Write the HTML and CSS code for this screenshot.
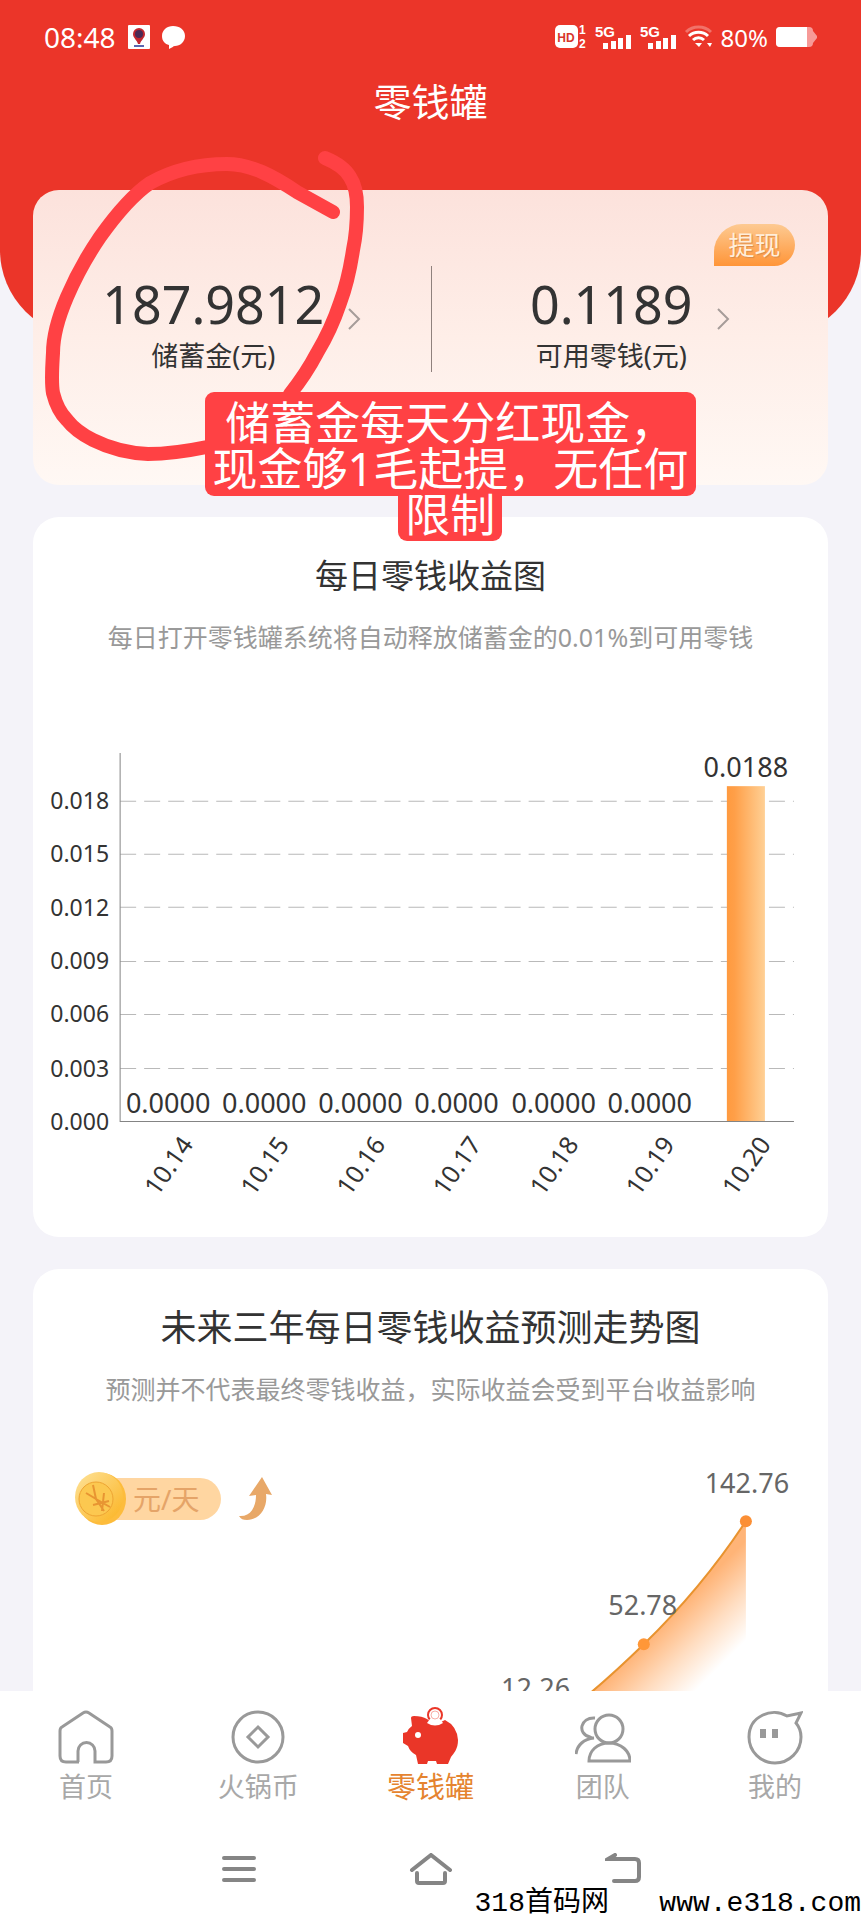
FILE: index.html
```html
<!doctype html>
<html lang="zh-CN">
  <head>
    <meta charset="UTF-8" />
    <meta name="viewport" content="width=device-width, initial-scale=1" />
    <title>零钱罐</title>
    <link rel="stylesheet" href="styles.css">
  </head>
  <body>
    <main class="content">
      <header class="hero">
        <div class="status">
          <span class="status-time">08:48</span>
          <svg class="status-app" width="22" height="24" viewBox="0 0 22 24">
            <rect width="22" height="24" rx="1" fill="#fff" />
            <path d="M11 3a6 6 0 0 1 6 6c0 4-4 6-5 10h-2C9 15 5 13 5 9a6 6 0 0 1 6-6z" fill="#c3272f" />
            <circle cx="11" cy="9" r="4" fill="#4a2a55" />
            <path d="M6 21h10" stroke="#5a66b0" stroke-width="2" />
          </svg>
          <svg class="status-chat" width="23" height="23" viewBox="0 0 23 23">
            <path d="M11 0c7 0 12 4 12 10s-5 10-10 10c-2 0-3 2-6 3V19C3 18 0 15 0 10 0 4 5 0 11 0z" fill="#fff" />
          </svg>
          <span class="status-gap"></span>
          <svg width="32" height="24" viewBox="0 0 32 24" fill="#fff">
            <rect width="23" height="23" rx="5" />
            <text class="hd-text" x="11" y="17" text-anchor="middle">HD</text>
            <text class="sim-text" x="24" y="9">1</text>
            <text class="sim-text" x="24" y="23">2</text>
          </svg>
          <svg width="37" height="24" viewBox="0 0 37 24" fill="#fff">
            <text class="net-text" x="0" y="12">5G</text>
            <path d="M8 18h5v6H8zM16 16h5v8h-5zM23 13h5v11h-5zM31 10h5v14h-5z" />
          </svg>
          <svg width="37" height="24" viewBox="0 0 37 24" fill="#fff">
            <text class="net-text" x="0" y="12">5G</text>
            <path d="M8 18h5v6H8zM16 16h5v8h-5zM23 13h5v11h-5zM31 10h5v14h-5z" />
          </svg>
          <svg width="28" height="22" viewBox="0 0 28 22" fill="none" stroke="#fff" stroke-width="3">
            <path d="M1 6a18 18 0 0 1 25 0" opacity="0.3" />
            <path d="M4 10a14 14 0 0 1 19 0" />
            <path d="M8 14a8 8 0 0 1 11 0" />
            <path d="M10 17h7l-3 4z" fill="#fff" stroke="none" />
            <path d="M22 17h5l-2 4z" fill="#fff" stroke="none" />
          </svg>
          <span class="status-battery">80%</span>
          <svg width="41" height="20" viewBox="0 0 41 20">
            <path d="M4 0h29q4 0 4 4l4 5v2l-4 5q0 4-4 4H4q-4 0-4-4V4q0-4 4-4z" fill="#f79a97" />
            <path d="M4 0h27v20H4q-4 0-4-4V4q0-4 4-4z" fill="#fff" />
          </svg>
        </div>
        <h1 class="hero-title">零钱罐</h1>
      </header>

      <section class="card balance">
        <button class="withdraw" type="button">提现</button>
        <a class="balance-item" href="#savings">
          <span class="balance-text">
            <strong class="balance-value">187.9812</strong>
            <span class="balance-label">储蓄金(元)</span>
          </span>
          <svg width="13" height="22" viewBox="0 0 13 22"><path class="chevron" d="M1 1l10 10L1 21" /></svg>
        </a>
        <a class="balance-item" href="#change">
          <span class="balance-text">
            <strong class="balance-value">0.1189</strong>
            <span class="balance-label">可用零钱(元)</span>
          </span>
          <svg width="13" height="22" viewBox="0 0 13 22"><path class="chevron" d="M1 1l10 10L1 21" /></svg>
        </a>

        <!-- hand-drawn circle and note -->
        <svg class="scribble" width="340" height="330" viewBox="0 0 340 330">
          <path d="M300 64L264 44C240 28 218 16 194 16C164 16 140 22 117 35C98 48 82 68 67 89C54 108 43 128 34 149C25 170 20 188 20 205C19 222 18 234 20 245C23 257 28 266 34 272C41 281 50 287 60 292C78 301 94 305 115 306Q140 306 174 299" />
          <path d="M292 10C304 15 312 20 317 29C323 38 324 48 324 59C324 74 323 88 320 102C317 122 313 139 307 155C301 173 293 190 284 205Q273 226 257 246" />
        </svg>
        <p class="note">
          <span class="note-main">储蓄金每天分红现金，<br>现金够1毛起提，无任何</span>
          <span class="note-tail">限制</span>
        </p>
      </section>

      <section class="card">
        <h2 class="card-title card-title-small">每日零钱收益图</h2>
        <p class="card-hint">每日打开零钱罐系统将自动释放储蓄金的0.01%到可用零钱</p>
        <svg class="chart" viewBox="0 0 794 581">
          <defs>
            <linearGradient id="bar-fill">
              <stop offset="0" stop-color="#ff9a3f" />
              <stop offset="0.2" stop-color="#ff9f48" />
              <stop offset="1" stop-color="#ffd095" />
            </linearGradient>
          </defs>
          <path class="grid-line" d="M87 146H760M87 199H760M87 252H760M87 306H760M87 359H760M87 413H760" />
          <rect x="693" y="131" width="38" height="335" fill="url(#bar-fill)" />
          <path class="axis-line" d="M87 98V466H760" />
          <g class="y-labels">
            <text x="76" y="154">0.018</text>
            <text x="76" y="207">0.015</text>
            <text x="76" y="261">0.012</text>
            <text x="76" y="314">0.009</text>
            <text x="76" y="367">0.006</text>
            <text x="76" y="421">0.003</text>
            <text x="76" y="474">0.000</text>
          </g>
          <g class="bar-values">
            <text x="135" y="457">0.0000</text>
            <text x="231" y="457">0.0000</text>
            <text x="327" y="457">0.0000</text>
            <text x="423" y="457">0.0000</text>
            <text x="520" y="457">0.0000</text>
            <text x="616" y="457">0.0000</text>
            <text x="712" y="122">0.0188</text>
          </g>
          <g class="x-labels">
            <text transform="translate(161 489) rotate(-55)">10.14</text>
            <text transform="translate(257 489) rotate(-55)">10.15</text>
            <text transform="translate(353 489) rotate(-55)">10.16</text>
            <text transform="translate(449 489) rotate(-55)">10.17</text>
            <text transform="translate(546 489) rotate(-55)">10.18</text>
            <text transform="translate(642 489) rotate(-55)">10.19</text>
            <text transform="translate(738 489) rotate(-55)">10.20</text>
          </g>
        </svg>
      </section>

      <section class="card">
        <h2 class="card-title">未来三年每日零钱收益预测走势图</h2>
        <p class="card-hint">预测并不代表最终零钱收益，实际收益会受到平台收益影响</p>
        <div class="trend">
          <svg class="chart" viewBox="0 0 794 400">
            <defs>
              <linearGradient id="area-fill" gradientUnits="userSpaceOnUse" x1="640" y1="205" x2="690" y2="255">
                <stop offset="0" stop-color="#ffb477" />
                <stop offset="0.5" stop-color="#ffdcbf" />
                <stop offset="1" stop-color="#ffffff" />
              </linearGradient>
            </defs>
            <path d="M508 318C542 298 577 270 610 237C650 198 685 155 712 114V400H508z" fill="url(#area-fill)" />
            <path class="trend-line" d="M500 328C542 300 574 272 610 237C650 198 685 155 712 114" />
            <circle cx="610" cy="237" r="6" fill="#ff9738" />
            <circle cx="712" cy="114" r="6" fill="#fb8f35" />
            <g class="trend-values">
              <text x="502" y="291">12.26</text>
              <text x="609" y="208">52.78</text>
              <text x="713" y="86">142.76</text>
            </g>
          </svg>
          <div class="legend">
            <svg class="coin" width="56" height="56" viewBox="0 0 56 56">
              <defs>
                <linearGradient id="coin-fill" x2="1" y2="1">
                  <stop offset="0" stop-color="#fee39a" />
                  <stop offset="1" stop-color="#fbb321" />
                </linearGradient>
              </defs>
              <ellipse cx="29" cy="28" rx="24" ry="26" fill="#fdbc3c" />
              <ellipse cx="26" cy="26" rx="24" ry="25" fill="url(#coin-fill)" />
              <circle cx="23" cy="28" r="17" fill="#fcc850" stroke="#eea432" stroke-width="1" />
              <path d="M20 14l3 14 14 8M13 22l10 6 8 12M31 22l-2 18M20 34l16-4" fill="none" stroke="#e89532" stroke-width="2" />
            </svg>
            <span class="legend-unit">元/天</span>
            <svg width="33" height="43" viewBox="0 0 33 43">
              <path d="M23 0l10 18-6-1c2 14-7 26-19 26-4 0-6-1-8-4 11 1 17-8 17-21l-7 1z" fill="#e8a868" />
            </svg>
          </div>
        </div>
      </section>
    </main>

    <footer class="footer">
      <nav class="tabs">
        <a class="tab" href="#home">
          <svg class="tab-icon" viewBox="0 0 56 56">
            <path d="M21 53H8q-6 0-6-6V22q0-3 2-4L25 4q3-2 6 0l21 14q2 1 2 4v25q0 6-6 6H37V42a8 8 0 0 0-17 0v11" />
          </svg>
          首页
        </a>
        <a class="tab" href="#coin">
          <svg class="tab-icon" viewBox="0 0 56 56">
            <circle cx="28" cy="28" r="25" />
            <path d="M28 18l10 10-10 10-10-10z" />
          </svg>
          火锅币
        </a>
        <a class="tab tab-active" href="#jar">
          <svg class="tab-icon-fill" viewBox="0 0 56 56">
            <path d="M8 9q0-2 3-2 8 0 13 3 9 7 18 1 12 6 13 20c0 9-4 13-7 17l-3 7H34l-1-3h-8l-1 3H15l-2-9q-6-3-8-9l-5-3V24l4-1q2-4 5-6z" />
            <circle cx="15" cy="26" r="3" fill="#fff" />
            <circle cx="32" cy="6" r="7" fill="#fff" stroke="#ea3628" stroke-width="2" />
            <path d="M24 14q8 5 16 0l-3-4H27z" fill="#fff" />
            <circle cx="32" cy="6" r="4" fill="none" stroke="#ea3628" stroke-width="1" opacity="0.4" />
          </svg>
          零钱罐
        </a>
        <a class="tab" href="#team">
          <svg class="tab-icon" viewBox="0 0 56 56">
            <circle cx="34" cy="20" r="14" />
            <path d="M14 52c0-10 8-18 20-18s21 8 21 18z" />
            <path d="M20 9c-15-1-18 16-5 19q2 1 4 1C9 30 2 36 1 45" />
          </svg>
          团队
        </a>
        <a class="tab" href="#mine">
          <svg class="tab-icon" viewBox="0 0 56 56">
            <path d="M40 7C25-2 2 7 2 28a26 26 0 0 0 52 0q0-8-5-14l5-10z" />
            <path class="eyes" d="M16 20v9M28 20v9" />
          </svg>
          我的
        </a>
      </nav>
      <div class="system">
        <button class="system-button" type="button" aria-label="菜单">
          <svg width="36" height="32" viewBox="0 0 36 32"><path d="M3 5h30M3 16h30M3 27h30" /></svg>
        </button>
        <button class="system-button" type="button" aria-label="主屏幕">
          <svg width="44" height="32" viewBox="0 0 44 32"><path d="M3 17L22 2l19 15M8 20v8q0 2 2 2h24q2 0 2-2v-8" /></svg>
        </button>
        <button class="system-button" type="button" aria-label="返回">
          <svg width="36" height="32" viewBox="0 0 36 32"><path d="M10 2L3 6h27q4 0 4 4v14q0 4-4 4H9" /></svg>
        </button>
      </div>
      <p class="watermark">318首码网   www.e318.com</p>
    </footer>
  </body>
</html>
```

FILE: styles.css
```css
* {
  margin: 0;
  padding: 0;
  box-sizing: border-box;
}

body {
  display: flex;
  flex-direction: column;
  height: 100vh;
  background: #f4f3f9;
  color: #333;
  font-family: "Noto Sans", "Noto Sans CJK SC", sans-serif;
  font-size: 27px;
}

a {
  color: inherit;
  text-decoration: none;
}

button {
  border: none;
  background: none;
  font-family: inherit;
  cursor: pointer;
}

svg {
  display: block;
  flex: none;
}

.content {
  flex: 1;
  min-height: 0;
  overflow-y: auto;
  scrollbar-width: none;
}

/* red top area */
.hero {
  height: 337px;
  padding-top: 18px;
  border-radius: 0 0 87px 87px;
  background: #eb3529;
  color: #fff;
}

.status {
  display: flex;
  align-items: center;
  gap: 8px;
  height: 38px;
  padding: 0 44px;
}

.status svg {
  overflow: visible;
}

.status-time {
  font-size: 28px;
}

.status-app {
  margin-left: 4px;
}

.status-chat {
  margin-left: 4px;
}

.status-gap {
  flex: 1;
}

.status-battery {
  font-size: 24px;
}

.hd-text,
.sim-text,
.net-text {
  font-family: "Liberation Sans", sans-serif;
  font-size: 12px;
  font-weight: 700;
}

.hd-text {
  fill: #d8352b;
}

.net-text {
  font-size: 15px;
}

.hero-title {
  margin-top: 20px;
  font-size: 38px;
  font-weight: 400;
  line-height: 50px;
  text-align: center;
}

/* cards */
.card {
  margin: 0 33px 32px;
  padding-top: 36px;
  border-radius: 26px;
  background: #fff;
}

.card-title {
  font-size: 36px;
  font-weight: 400;
  line-height: 46px;
  text-align: center;
}

.card-title-small {
  font-size: 33px;
}

.card-hint {
  margin-top: 20px;
  color: #999;
  font-size: 25px;
  line-height: 36px;
  text-align: center;
  white-space: nowrap;
}

.balance {
  position: relative;
  display: grid;
  grid-template-columns: 1fr 1fr;
  margin-top: -147px;
  padding: 76px 0 113px;
  background: linear-gradient(#fce2dc, #feeee8 50%, #fff8f4);
}

.balance-item {
  display: flex;
  align-items: center;
  justify-content: center;
  gap: 24px;
  height: 106px;
}

.balance-item + .balance-item {
  border-left: 1px solid #8f817d;
}

.balance-text {
  display: flex;
  flex-direction: column;
  align-items: center;
  padding-top: 4px;
}

.balance-value {
  font-size: 52px;
  font-weight: 400;
  line-height: 70px;
}

.balance-label {
  line-height: 34px;
}

.chevron {
  fill: none;
  stroke: #a69c99;
  stroke-width: 2;
}

.withdraw {
  position: absolute;
  top: 34px;
  right: 33px;
  width: 81px;
  height: 42px;
  border-radius: 28px 21px 21px 0;
  background: linear-gradient(#fdca92, #ff9538);
  color: #ffeeda;
  font-size: 26px;
  line-height: 42px;
  text-shadow: 1px 1px 1px #d98a4a;
}

.scribble {
  position: absolute;
  top: -42px;
  left: 0;
  fill: none;
  stroke: #ff4144;
  stroke-width: 14;
  stroke-linecap: round;
}

.note {
  position: absolute;
  top: 202px;
  left: 50%;
  z-index: 1;
  display: flex;
  flex-direction: column;
  align-items: center;
  margin-left: -226px;
  color: #fff;
  font-size: 45px;
  line-height: 46px;
  text-align: center;
  white-space: nowrap;
}

.note-main {
  padding: 8px 8px 4px;
  border-radius: 9px;
  background: #ff4144;
}

.note-tail {
  margin-top: -4px;
  padding: 0 7px 3px;
  border-radius: 0 0 9px 9px;
  background: #ff4144;
}

/* charts */
.chart {
  width: 100%;
}

.grid-line {
  fill: none;
  stroke: #b9b9b9;
  stroke-width: 1;
  stroke-dasharray: 16 8;
}

.axis-line {
  fill: none;
  stroke: #848484;
  stroke-width: 1;
}

.y-labels,
.x-labels {
  fill: #333;
  font-size: 23px;
  text-anchor: end;
}

.x-labels {
  font-size: 25px;
}

.bar-values {
  fill: #333;
  font-size: 27px;
  text-anchor: middle;
}

.trend {
  display: grid;
}

.trend > * {
  grid-area: 1 / 1;
}

.trend-line {
  fill: none;
  stroke: #e8932f;
  stroke-width: 2;
}

.trend-values {
  fill: #666;
  font-size: 27px;
  text-anchor: middle;
}

.legend {
  display: flex;
  align-items: center;
  align-self: start;
  padding: 64px 0 0 40px;
}

.coin {
  z-index: 1;
}

.legend-unit {
  height: 42px;
  margin: 0 18px 0 -36px;
  padding: 0 22px 0 40px;
  border-radius: 21px;
  background: #ffd6a1;
  color: #e5a468;
  font-size: 28px;
  line-height: 42px;
}

/* bottom bars */
.footer {
  position: relative;
  height: 229px;
  background: #fff;
}

.tabs {
  display: flex;
  padding-top: 18px;
}

.tab {
  flex: 1;
  display: flex;
  flex-direction: column;
  align-items: center;
  gap: 4px;
  color: #a8a8a8;
  line-height: 36px;
}

.tab-active {
  color: #e5842f;
  font-size: 29px;
}

.tab-icon,
.tab-icon-fill {
  width: 56px;
  height: 56px;
}

.tab-icon {
  fill: none;
  stroke: #999;
  stroke-width: 3;
}

.tab-icon-fill {
  overflow: visible;
  fill: #ea3628;
}

.eyes {
  stroke-width: 6;
}

.system {
  display: flex;
  justify-content: center;
  gap: 148px;
  padding-top: 48px;
}

.system-button {
  display: flex;
  justify-content: center;
  width: 44px;
}

.system-button svg {
  fill: none;
  stroke: #858585;
  stroke-width: 4;
  stroke-linecap: round;
}

.watermark {
  position: absolute;
  right: 0;
  bottom: 0;
  color: #000;
  font-family: "Liberation Mono", "Noto Sans CJK SC", monospace;
  font-size: 28px;
  line-height: 32px;
  white-space: pre;
}
```
